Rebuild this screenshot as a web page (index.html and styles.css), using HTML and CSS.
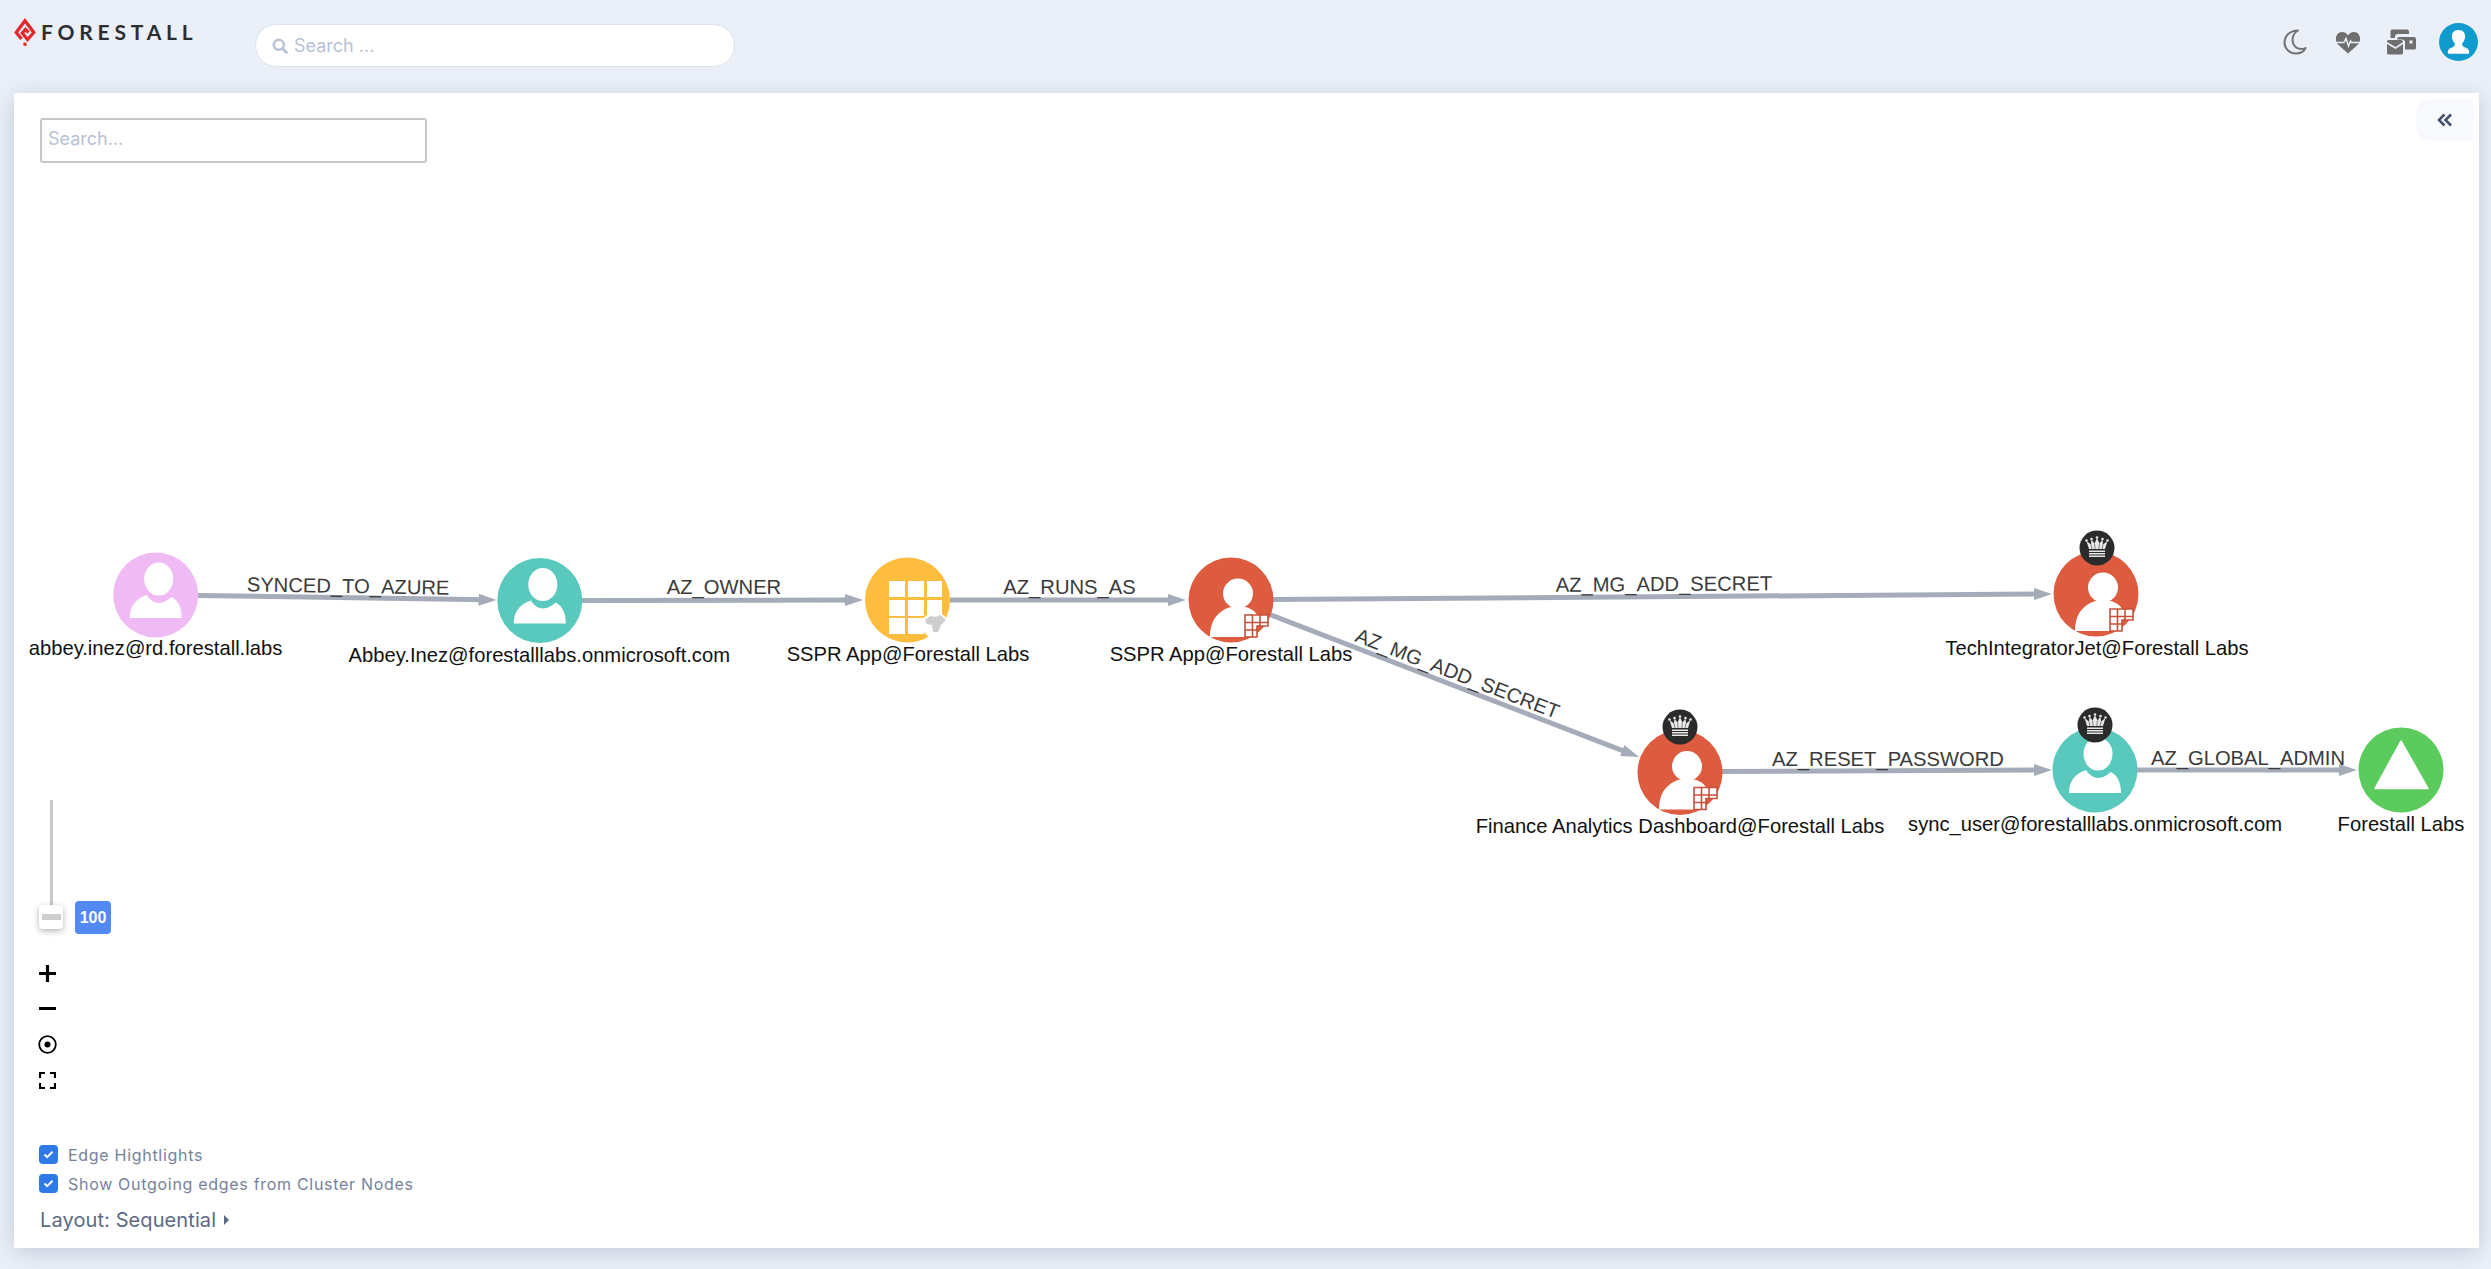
FILE: index.html
```html
<!DOCTYPE html>
<html lang="en">
<head>
<meta charset="utf-8">
<title>Forestall</title>
<link rel="stylesheet" href="styles.css">
</head>
<body>
<header class="topbar">
  <div class="brand">
    <svg class="brand-mark" viewBox="0 0 22 28" aria-hidden="true">
      <path d="M7.500 21 L2.200 14.500 L11 2.800 L19.800 14.500 L13.500 21.500 L8.300 15 L11.500 11.500 L14.500 14.500" fill="none" stroke="#e32b2e" stroke-width="3.300"/>
      <rect x="9.400" y="24.600" width="3.200" height="3.200" fill="#e32b2e"/>
    </svg>
    <span class="brand-name">FORESTALL</span>
  </div>
  <div class="global-search">
    <svg class="global-search-icon" viewBox="0 0 16 16" aria-hidden="true">
      <circle cx="6.800" cy="6.800" r="5" fill="none" stroke="#b8c2d6" stroke-width="2.400"/>
      <path d="M10.500 10.500 L14.500 14.500" stroke="#b8c2d6" stroke-width="2.800" stroke-linecap="round"/>
    </svg>
    <span class="global-search-text">Search ...</span>
  </div>
  <nav class="top-actions">
    <svg class="icon-moon" viewBox="0 0 24 26" aria-hidden="true">
      <path d="M15 1.500 C7 1.500 1.500 7 1.500 13.500 C1.500 20 7 24.500 13 24.500 C17.500 24.500 21 22.500 22.500 19 C21.500 19.600 20 20 18.500 20 C13 20 9.500 16 9.500 11 C9.500 7 11.500 3.500 15 1.500 Z" fill="none" stroke="#737373" stroke-width="2" stroke-linejoin="round"/>
    </svg>
    <svg class="icon-heart" viewBox="0 0 26 23" aria-hidden="true">
      <path d="M13 22.500 L3 13.500 C-1 9 1 1 7 1 C9.800 1 11.800 2.500 13 4.500 C14.200 2.500 16.200 1 19 1 C25 1 27 9 23 13.500 Z" fill="#6f6f6f"/>
      <path d="M1 11.500 H9 L11 7.500 L13.500 15 L15.500 10 L16.500 11.500 H25" fill="none" stroke="#ebf0f8" stroke-width="1.500"/>
    </svg>
    <svg class="icon-devices" viewBox="0 0 29 26" aria-hidden="true">
      <path d="M5 0.500 H20 Q22 0.500 22 2.500 V5 H11 Q8 5 8 8 V9 H3.500 V2 Q3.500 0.500 5 0.500 Z" fill="#6f6f6f"/>
      <path d="M12 8 H27 Q29 8 29 10 V19 Q29 20.500 27 20.500 H18 V13 Q18 10.500 15 10.500 H10 Q10 8 12 8 Z" fill="#6f6f6f"/>
      <rect x="22.500" y="11.500" width="3" height="3" fill="#ebf0f8"/>
      <path d="M1 11 H14 Q16 11 16 13 L8.500 18 L0 13 Q0 11 1 11 Z" fill="#6f6f6f"/>
      <path d="M0 15 L8.500 20 L16 15 V24 Q16 25.500 14 25.500 H2 Q0 25.500 0 24 Z" fill="#6f6f6f"/>
    </svg>
    <svg class="icon-avatar" viewBox="0 0 39 38" aria-hidden="true">
      <ellipse cx="19.500" cy="19" rx="19.500" ry="19" fill="#0f9bce"/>
      <path d="M19.500 7 C14.500 7 12.500 10.500 13 14.500 C13.300 17 14.500 19 15.800 20.500 C16 22 15.500 23.500 13.500 24.300 C10.500 25.300 8.800 26.500 8.800 29.500 C8.800 30.800 9.500 30.800 10.500 30.800 H28.500 C29.500 30.800 30.200 30.800 30.200 29.500 C30.200 26.500 28.500 25.300 25.500 24.300 C23.500 23.500 23 22 23.200 20.500 C24.500 19 25.700 17 26 14.500 C26.500 10.500 24.500 7 19.500 7 Z" fill="#fbfbfb"/>
    </svg>
  </nav>
</header>

<main class="panel">
  <svg class="graph" viewBox="14 93 2465 1155" aria-label="Attack path graph">
    <defs>
      <marker id="arrow" viewBox="0 0 18 12" refX="8" refY="6" markerWidth="18" markerHeight="12" markerUnits="userSpaceOnUse" orient="auto">
        <path d="M0 0 L18 6 L0 12 Z" fill="#a5abb9"/>
      </marker>
      <g id="user">
        <ellipse cx="3" cy="-16" rx="14.500" ry="16.500" fill="#fff"/>
        <path d="M-26 23 C-26 12 -21 4 -9 0 C-6 5 -1 8 3 8 C8 8 12 5 16 2 C23 6 26 13 26 23 Z" fill="#fff"/>
      </g>
      <g id="sp">
        <circle cx="7" cy="-6.500" r="15" fill="#fff"/>
        <path d="M-21 37 C-21 18 -10 7 7 6 C16 6 24 10 26 15 L14 15 V37 Z" fill="#fff"/>
        <path d="M14 15 H37 V26 H26 V37 H14 Z" fill="#fff" stroke="#c4523c" stroke-width="1.600"/>
        <path d="M21.500 15 V37 M29 15 V26 M14 22.500 H37 M14 30 H26" stroke="#c4523c" stroke-width="1.600" fill="none"/>
      </g>
      <g id="crown">
        <circle r="17.500" fill="#2b2b2b"/>
        <path d="M-8 1 L-10.500 -7 L-6 -3.500 L-5.500 -8.500 L-2.500 -4.500 L0 -10 L2.500 -4.500 L5.500 -8.500 L6 -3.500 L10.500 -7 L8 1 Z" fill="#e8e8e8"/>
        <path d="M-5 1 L-6 -3.500 M-1.800 1 L-2.500 -4.500 M1.800 1 L2.500 -4.500 M5 1 L6 -3.500" stroke="#777" stroke-width="0.900"/>
        <circle cx="-10.500" cy="-7.500" r="1.300" fill="#e8e8e8"/>
        <circle cx="-5.500" cy="-9" r="1.300" fill="#e8e8e8"/>
        <circle cx="0" cy="-10.500" r="1.300" fill="#e8e8e8"/>
        <circle cx="5.500" cy="-9" r="1.300" fill="#e8e8e8"/>
        <circle cx="10.500" cy="-7.500" r="1.300" fill="#e8e8e8"/>
        <rect x="-8" y="2.500" width="16" height="1.500" fill="#e8e8e8"/>
        <rect x="-8" y="5" width="16" height="1.500" fill="#e8e8e8"/>
        <rect x="-8" y="7.500" width="16" height="1.500" fill="#e8e8e8"/>
      </g>
    </defs>

    <g class="edges">
      <line x1="198" y1="595.500" x2="486.500" y2="599.800" marker-end="url(#arrow)"/>
      <line x1="582" y1="600.500" x2="853" y2="600" marker-end="url(#arrow)"/>
      <line x1="950" y1="600" x2="1176" y2="600" marker-end="url(#arrow)"/>
      <line x1="1273" y1="599.500" x2="2042" y2="594" marker-end="url(#arrow)"/>
      <line x1="1270" y1="614.500" x2="1629.700" y2="753.400" marker-end="url(#arrow)"/>
      <line x1="1722" y1="771.500" x2="2042" y2="770" marker-end="url(#arrow)"/>
      <line x1="2137" y1="770" x2="2347" y2="770" marker-end="url(#arrow)"/>
    </g>

    <g class="edge-labels">
      <text x="348" y="593" transform="rotate(0.950 348 593)">SYNCED_TO_AZURE</text>
      <text x="724" y="594">AZ_OWNER</text>
      <text x="1069.500" y="594">AZ_RUNS_AS</text>
      <text x="1664" y="591" transform="rotate(-0.400 1664 591)">AZ_MG_ADD_SECRET</text>
      <text x="1455" y="680" transform="rotate(21.100 1455 680)">AZ_MG_ADD_SECRET</text>
      <text x="1888" y="766">AZ_RESET_PASSWORD</text>
      <text x="2248" y="765">AZ_GLOBAL_ADMIN</text>
    </g>

    <g class="node">
      <circle cx="155.700" cy="595" r="42.500" fill="#f0bbf4"/>
      <use href="#user" x="155.700" y="595"/>
      <text x="155.500" y="655">abbey.inez@rd.forestall.labs</text>
    </g>
    <g class="node">
      <circle cx="539.800" cy="600.500" r="42.500" fill="#5ac9bd"/>
      <use href="#user" x="539.800" y="600.500"/>
      <text x="539.300" y="661.500">Abbey.Inez@forestalllabs.onmicrosoft.com</text>
    </g>
    <g class="node">
      <circle cx="907.500" cy="600" r="42.500" fill="#febd3e"/>
      <g fill="#fff">
        <rect x="889" y="581" width="16" height="16"/>
        <rect x="908" y="581" width="16" height="16"/>
        <rect x="927" y="581" width="15" height="16"/>
        <rect x="889" y="600" width="16" height="16"/>
        <rect x="908" y="600" width="16" height="16"/>
        <rect x="927" y="600" width="15" height="16"/>
        <rect x="889" y="618" width="16" height="16"/>
        <rect x="908" y="618" width="16" height="16"/>
        <circle cx="935" cy="625" r="13"/>
      </g>
      <path d="M925 620 L930 616 L936 617 L940 615 L946 620 L941 625 L938 632 L933 632 L932 625 L927 624 Z" fill="#cdcdcd"/>
      <text x="908" y="660.500">SSPR App@Forestall Labs</text>
    </g>
    <g class="node">
      <circle cx="1231" cy="600" r="42.500" fill="#dd5b3f"/>
      <use href="#sp" x="1231" y="600"/>
      <text x="1231" y="660.500">SSPR App@Forestall Labs</text>
    </g>
    <g class="node">
      <circle cx="2096" cy="594" r="42.500" fill="#dd5b3f"/>
      <use href="#sp" x="2096" y="594"/>
      <use href="#crown" x="2097" y="548"/>
      <text x="2097" y="655">TechIntegratorJet@Forestall Labs</text>
    </g>
    <g class="node">
      <circle cx="1680" cy="772.500" r="42.500" fill="#dd5b3f"/>
      <use href="#sp" x="1680" y="772.500"/>
      <use href="#crown" x="1680" y="727"/>
      <text x="1680" y="833">Finance Analytics Dashboard@Forestall Labs</text>
    </g>
    <g class="node">
      <circle cx="2095" cy="770" r="42.500" fill="#5ac9bd"/>
      <use href="#user" x="2095" y="770"/>
      <use href="#crown" x="2095" y="725"/>
      <text x="2095" y="831">sync_user@forestalllabs.onmicrosoft.com</text>
    </g>
    <g class="node">
      <circle cx="2401" cy="770" r="42.500" fill="#5bcb5d"/>
      <path d="M2401 741 L2428 788.500 H2375 Z" fill="#fff" stroke="#fff" stroke-width="1.500" stroke-linejoin="round"/>
      <text x="2401" y="831">Forestall Labs</text>
    </g>
  </svg>

  <div class="panel-top">
    <div class="graph-search">Search...</div>
    <button class="collapse" type="button" aria-label="Collapse">
      <svg viewBox="0 0 16 14" aria-hidden="true">
        <path d="M7.500 1.500 L2 7 L7.500 12.500 M14 1.500 L8.500 7 L14 12.500" fill="none" stroke="#44526c" stroke-width="2.600"/>
      </svg>
    </button>
  </div>

  <div class="panel-bottom">
    <div class="zoom-slider">
      <div class="slider-col">
        <div class="slider-track"></div>
        <div class="slider-handle"><span class="slider-grip"></span></div>
      </div>
      <div class="slider-value">100</div>
    </div>
    <div class="zoom-tools">
      <svg viewBox="0 0 17 17" aria-hidden="true"><path d="M8.500 0 V17 M0 8.500 H17" stroke="#000" stroke-width="3.200"/></svg>
      <svg viewBox="0 0 17 17" aria-hidden="true"><path d="M0 8.500 H17" stroke="#000" stroke-width="3"/></svg>
      <svg viewBox="0 0 19 19" aria-hidden="true"><circle cx="9.500" cy="9.500" r="8.300" fill="none" stroke="#000" stroke-width="1.800"/><circle cx="9.500" cy="9.500" r="3" fill="#000"/></svg>
      <svg viewBox="0 0 17 17" aria-hidden="true"><path d="M1 6 V1 H6 M11 1 H16 V6 M16 11 V16 H11 M6 16 H1 V11" fill="none" stroke="#000" stroke-width="2.200"/></svg>
    </div>
    <label class="option">
      <span class="check"><svg viewBox="0 0 12 10" aria-hidden="true"><path d="M1.500 5 L4.500 8 L10.500 2" fill="none" stroke="#fff" stroke-width="2.200"/></svg></span>
      Edge Hightlights
    </label>
    <label class="option">
      <span class="check"><svg viewBox="0 0 12 10" aria-hidden="true"><path d="M1.500 5 L4.500 8 L10.500 2" fill="none" stroke="#fff" stroke-width="2.200"/></svg></span>
      Show Outgoing edges from Cluster Nodes
    </label>
    <div class="layout-select">Layout: Sequential <span class="caret"></span></div>
  </div>
</main>
</body>
</html>
```

FILE: styles.css
```css
* { box-sizing: border-box; }

html, body {
  margin: 0;
  height: 1269px;
  overflow: hidden;
}

body {
  background: #ebf0f8;
  font-family: "Inter", "Liberation Sans", sans-serif;
  display: flex;
  flex-direction: column;
}

.topbar {
  height: 93px;
  flex: none;
  display: flex;
  align-items: flex-start;
  padding: 0 13px 0 14px;
}

.brand {
  width: 241px;
  display: flex;
  align-items: center;
  gap: 5px;
  padding-top: 18px;
}

.brand-mark {
  width: 22px;
  height: 28px;
}

.brand-name {
  font-family: "Lato", sans-serif;
  font-size: 21px;
  font-weight: 700;
  letter-spacing: 4.800px;
  color: #2b2f33;
  line-height: 28px;
}

.global-search {
  width: 480px;
  height: 43px;
  margin-top: 24px;
  background: #fff;
  border: 1px solid #dbe3f0;
  border-radius: 22px;
  display: flex;
  align-items: center;
  gap: 6px;
  padding-left: 16px;
}

.global-search-icon {
  width: 16px;
  height: 16px;
}

.global-search-text {
  color: #b8c2d6;
  font-size: 18px;
}

.top-actions {
  margin-left: auto;
  display: flex;
  align-items: center;
  height: 38px;
  margin-top: 23px;
}

.icon-moon { width: 24px; height: 26px; margin-right: 28px; }
.icon-heart { width: 26px; height: 23px; margin-right: 26px; }
.icon-devices { width: 29px; height: 26px; margin-right: 23px; }
.icon-avatar { width: 39px; height: 38px; }

.panel {
  position: relative;
  flex: none;
  width: 2465px;
  height: 1155px;
  margin-left: 14px;
  background: #fff;
  box-shadow: 0 4px 22px rgba(90, 105, 140, 0.28);
  display: flex;
  flex-direction: column;
  justify-content: space-between;
}

.graph {
  position: absolute;
  inset: 0;
  width: 100%;
  height: 100%;
}

.edges line {
  stroke: #a5abb9;
  stroke-width: 5;
}

.edge-labels text {
  font-family: "Liberation Sans", Arial, sans-serif;
  font-size: 20.200px;
  fill: #3a3a3a;
  text-anchor: middle;
}

.node text {
  font-family: "Liberation Sans", Arial, sans-serif;
  font-size: 20.200px;
  fill: #111;
  text-anchor: middle;
}

.panel-top {
  position: relative;
  display: flex;
  justify-content: space-between;
  align-items: flex-start;
  padding: 6px 6px 0 26px;
}

.graph-search {
  width: 387px;
  height: 45px;
  margin-top: 19px;
  border: 2px solid #c8c8c8;
  border-radius: 3px;
  background: #fff;
  color: #b8c2d6;
  font-size: 18px;
  line-height: 37px;
  padding-left: 6px;
}

.collapse {
  width: 57px;
  height: 42px;
  border: 0;
  padding: 0;
  background: #f8f9fc;
  border-radius: 14px 0 0 14px;
  display: flex;
  align-items: center;
  justify-content: center;
}

.collapse svg {
  width: 16px;
  height: 14px;
}

.panel-bottom {
  position: relative;
  display: flex;
  flex-direction: column;
  align-items: flex-start;
  padding: 0 0 15px 25px;
}

.zoom-slider {
  display: flex;
  align-items: flex-end;
  gap: 12px;
}

.slider-col {
  width: 24px;
  display: flex;
  flex-direction: column;
  align-items: center;
}

.slider-track {
  width: 3px;
  height: 105px;
  background: #c8c8c8;
}

.slider-handle {
  width: 24px;
  height: 24px;
  background: #fff;
  border-radius: 4px;
  box-shadow: 0 2px 6px rgba(0, 0, 0, 0.3);
  display: flex;
  align-items: center;
  justify-content: center;
}

.slider-grip {
  width: 19px;
  height: 6px;
  background: #cdcdcd;
}

.slider-value {
  width: 36px;
  height: 33px;
  margin-bottom: -5px;
  border-radius: 4px;
  background: #5289f5;
  color: #fff;
  font-family: "Liberation Sans", Arial, sans-serif;
  font-size: 16px;
  font-weight: 700;
  line-height: 33px;
  text-align: center;
}

.zoom-tools {
  display: flex;
  flex-direction: column;
  gap: 18px;
  margin-top: 36px;
  margin-bottom: 56px;
}

.zoom-tools svg {
  display: block;
  width: 17px;
  height: 17px;
}

.zoom-tools svg:nth-child(3) {
  width: 19px;
  height: 19px;
  margin-left: -1px;
}

.option {
  display: flex;
  align-items: center;
  gap: 10px;
  height: 19px;
  margin-bottom: 10px;
  font-size: 16px;
  letter-spacing: 0.700px;
  color: #76829a;
}

.check {
  width: 19px;
  height: 19px;
  border-radius: 4px;
  background: #2f7ae8;
  display: flex;
  align-items: center;
  justify-content: center;
}

.check svg {
  width: 11px;
  height: 9px;
}

.layout-select {
  margin-left: 1px;
  margin-top: 4px;
  font-size: 20px;
  letter-spacing: 0.100px;
  line-height: 26px;
  color: #5a6b85;
  display: flex;
  align-items: center;
  gap: 8px;
}

.caret {
  width: 0;
  height: 0;
  border-left: 5px solid #5a6b85;
  border-top: 5px solid transparent;
  border-bottom: 5px solid transparent;
}
```
